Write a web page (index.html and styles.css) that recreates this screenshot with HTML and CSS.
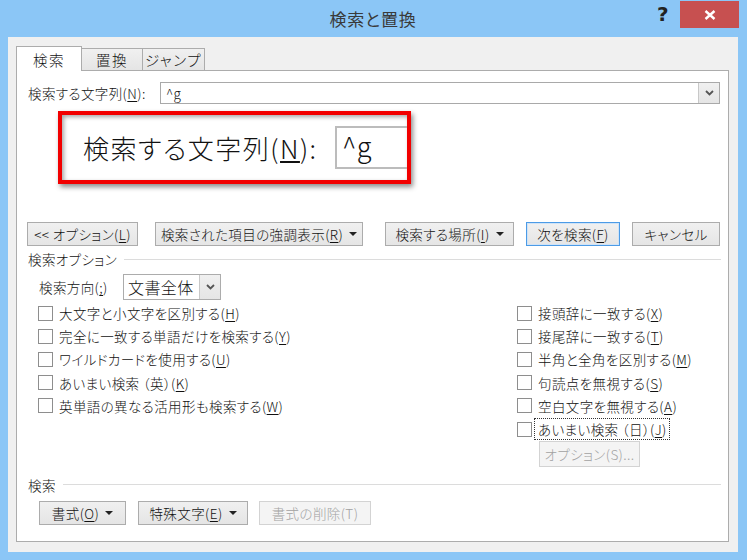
FILE: index.html
```html
<!DOCTYPE html>
<html lang="ja">
<head>
  <meta charset="UTF-8">
  <title>検索と置換</title>
  <link rel="stylesheet" href="styles.css">
</head>
<body>
  <div class="window">
    <div class="titlebar">
      <span></span>
      <div class="title">検索と置換</div>
      <div class="controls">
        <span class="help">?</span>
        <span class="close">
          <svg width="12" height="10" viewBox="0 0 12 10"><path d="M1.5 1L10.5 9M10.5 1L1.5 9" stroke="#fff" stroke-width="2.4"/></svg>
        </span>
      </div>
    </div>

    <div class="client">
      <div class="tabs">
        <div class="tab active">検索</div>
        <div class="tab tab-replace">置換</div>
        <div class="tab tab-jump">ジャンプ</div>
      </div>

      <div class="panel">
        <div class="find-row">
          <label class="find-label">検索する文字列(<u>N</u>):</label>
          <div class="combo find-input">
            <span class="combo-text">^g</span>
            <span class="drop"><svg width="9" height="6" viewBox="0 0 9 6"><path d="M1 1L4.5 4.5L8 1" fill="none" stroke="#555" stroke-width="1.8"/></svg></span>
          </div>
        </div>

        <div class="callout">
          <span class="callout-label">検索する文字列(<u>N</u>):</span>
          <span class="callout-input">^g</span>
        </div>

        <div class="btn-row">
          <button class="btn b-opt">&lt;&lt; オプション(<u>L</u>)</button>
          <button class="btn b-hilite">検索された項目の強調表示(<u>R</u>)<i class="tri"></i></button>
          <button class="btn b-where">検索する場所(<u>I</u>)<i class="tri"></i></button>
          <button class="btn b-next">次を検索(<u>F</u>)</button>
          <button class="btn b-cancel">キャンセル</button>
        </div>

        <div class="group-title"><span>検索オプション</span><i class="rule"></i></div>

        <div class="dir-row">
          <span class="dir-label">検索方向(<u>;</u>)</span>
          <div class="combo dir-combo">
            <span class="combo-text">文書全体</span>
            <span class="drop"><svg width="9" height="6" viewBox="0 0 9 6"><path d="M1 1L4.5 4.5L8 1" fill="none" stroke="#555" stroke-width="1.8"/></svg></span>
          </div>
        </div>

        <div class="checks">
          <div class="col col-left">
            <div class="check"><i class="box"></i><span>大文字と小文字を区別する(<u>H</u>)</span></div>
            <div class="check"><i class="box"></i><span>完全に一致する単語だけを検索する(<u>Y</u>)</span></div>
            <div class="check"><i class="box"></i><span>ワイルドカードを使用する(<u>U</u>)</span></div>
            <div class="check"><i class="box"></i><span>あいまい検索 （英）(<u>K</u>)</span></div>
            <div class="check"><i class="box"></i><span>英単語の異なる活用形も検索する(<u>W</u>)</span></div>
          </div>
          <div class="col col-right">
            <div class="check"><i class="box"></i><span>接頭辞に一致する(<u>X</u>)</span></div>
            <div class="check"><i class="box"></i><span>接尾辞に一致する(<u>T</u>)</span></div>
            <div class="check"><i class="box"></i><span>半角と全角を区別する(<u>M</u>)</span></div>
            <div class="check"><i class="box"></i><span>句読点を無視する(<u>S</u>)</span></div>
            <div class="check"><i class="box"></i><span>空白文字を無視する(<u>A</u>)</span></div>
            <div class="check"><i class="box"></i><span class="focus">あいまい検索 （日）(<u>J</u>)</span></div>
            <button class="btn disabled b-sub">オプション(S)...</button>
          </div>
        </div>

        <div class="group-title group-find"><span>検索</span><i class="rule"></i></div>

        <div class="btn-row bottom-row">
          <button class="btn b-format">書式(<u>O</u>)<i class="tri"></i></button>
          <button class="btn b-special">特殊文字(<u>E</u>)<i class="tri"></i></button>
          <button class="btn disabled b-clear">書式の削除(T)</button>
        </div>
      </div>
    </div>
  </div>
</body>
</html>
```

FILE: styles.css
```css
* {
  margin: 0;
  padding: 0;
  box-sizing: border-box;
}

body {
  width: 747px;
  height: 560px;
  overflow: hidden;
  font-family: "Noto Sans CJK JP", "Noto Sans", sans-serif;
  font-size: 13.5px;
  font-weight: 300;
  letter-spacing: 0.4px;
  font-feature-settings: "palt";
  color: #111;
}

u {
  text-underline-offset: 2px;
}

.window {
  width: 747px;
  height: 560px;
  background: #8bc6f6;
  padding: 0 9px 8px 8px;
}

/* title bar */

.titlebar {
  height: 37px;
  display: grid;
  grid-template-columns: 1fr auto 1fr;
  align-items: start;
}

.title {
  font-size: 17px;
  font-weight: 400;
  color: #3a3a3a;
  line-height: 37px;
  letter-spacing: 0.8px;
}

.controls {
  justify-self: end;
  display: flex;
  align-items: flex-start;
  margin-right: -1px;
}

.help {
  font-family: "DejaVu Sans", sans-serif;
  font-weight: bold;
  font-size: 20px;
  line-height: 26px;
  color: #222;
  margin-right: 11px;
  margin-top: 1px;
}

.close {
  width: 59px;
  height: 27px;
  margin-top: 1px;
  background: #c75050;
  display: flex;
  align-items: center;
  justify-content: center;
}

/* client area */

.client {
  height: 515px;
  background: #f0f0f0;
  padding: 9px 10px 0 8px;
}

.tabs {
  display: flex;
  align-items: flex-end;
  height: 24px;
}

.tab {
  height: 22px;
  border: 1px solid #acacac;
  border-bottom: none;
  background: linear-gradient(#f0f0f0, #e5e5e5);
  display: flex;
  align-items: center;
  justify-content: center;
  font-size: 14.5px;
  letter-spacing: 1.5px;
}

.tab.active {
  width: 66px;
  height: 25px;
  margin-bottom: -1px;
  background: #fff;
  position: relative;
  z-index: 1;
}

.tab-replace {
  width: 62px;
  margin-left: -1px;
}

.tab-jump {
  width: 63px;
  margin-left: -1px;
}

.panel {
  width: 713px;
  height: 472px;
  border: 1px solid #acacac;
  background: #fff;
}

/* find field */

.find-row {
  display: flex;
  align-items: center;
  height: 22px;
  margin-top: 11px;
  padding-left: 11px;
}

.find-label {
  width: 132px;
}

.combo {
  display: flex;
  align-items: stretch;
  justify-content: space-between;
  border: 1px solid #a9a9a9;
  background: #fff;
}

.combo-text {
  display: flex;
  align-items: center;
  padding-left: 5px;
}

.find-input {
  width: 560px;
  height: 22px;
}

.drop {
  width: 21px;
  border-left: 1px solid #c8c8c8;
  background: linear-gradient(#f0f0f0, #e5e5e5);
  display: flex;
  align-items: center;
  justify-content: center;
}

/* red callout */

.callout {
  width: 353px;
  height: 73px;
  margin: 7px 0 0 41px;
  border: 4px solid #f20000;
  background: #fff;
  overflow: hidden;
  display: flex;
  align-items: center;
  padding-left: 21px;
  box-shadow: 2px 3px 5px rgba(0, 0, 0, 0.45), inset 2px 2px 4px rgba(0, 0, 0, 0.35);
}

.callout-label {
  flex: 0 0 252px;
  font-size: 26px;
  letter-spacing: 1.5px;
}

.callout-input {
  flex: 0 0 120px;
  height: 43px;
  border: 2px solid #bcbcbc;
  border-right: none;
  font-size: 27px;
  line-height: 36px;
  padding-left: 5px;
}

/* buttons */

.btn-row {
  display: flex;
  height: 24px;
  margin-top: 38px;
  padding-left: 10px;
}

.btn {
  height: 24px;
  border: 1px solid #acacac;
  background: linear-gradient(#f0f0f0, #e5e5e5);
  font: inherit;
  letter-spacing: inherit;
  color: #111;
  display: flex;
  align-items: center;
  justify-content: center;
}

.tri {
  display: inline-block;
  margin-left: 6px;
  border-left: 4px solid transparent;
  border-right: 4px solid transparent;
  border-top: 4px solid #222;
}

.b-opt { width: 111px; }
.b-hilite { width: 208px; margin-left: 17px; }
.b-where { width: 129px; margin-left: 22px; }
.b-next {
  width: 94px;
  margin-left: 12px;
  border-color: #4c9be6;
  box-shadow: inset 0 0 0 1px #cfe3f7;
}
.b-cancel { width: 88px; margin-left: 12px; }

.btn.disabled {
  background: #f4f4f4;
  border-color: #d3d3d3;
  color: #a2a2a2;
}

/* groups */

.group-title {
  display: flex;
  align-items: center;
  height: 16px;
  margin-top: 5px;
  padding: 0 7px 0 11px;
}

.rule {
  flex: 1;
  height: 1px;
  background: #dcdcdc;
  margin-left: 7px;
}

.group-find {
  margin-top: 10px;
}

.dir-row {
  display: flex;
  align-items: center;
  height: 26px;
  margin-top: 7px;
  padding-left: 22px;
}

.dir-label {
  width: 84px;
}

.dir-combo {
  width: 98px;
  height: 26px;
  border-color: #acacac;
}

.dir-combo .combo-text {
  font-size: 16px;
  padding-left: 4px;
}

/* checkboxes */

.checks {
  display: flex;
  margin-top: 1.5px;
  padding-left: 21px;
}

.col-left {
  width: 479px;
}

.check {
  height: 23.2px;
  display: flex;
  align-items: center;
}

.box {
  width: 15px;
  height: 15px;
  border: 1px solid #8e8e8e;
  background: #fff;
  margin-right: 6px;
  flex: none;
}

.focus {
  outline: 1px dotted #333;
  outline-offset: 0;
  margin-left: -3px;
  padding: 0 2px 0 3px;
}

.b-sub {
  width: 101px;
  height: 26px;
  margin-left: 22px;
}

.bottom-row {
  margin-top: 8px;
  padding-left: 22px;
}

.b-format { width: 87px; }
.b-special { width: 110px; margin-left: 12px; }
.b-clear { width: 112px; margin-left: 11px; }
```
